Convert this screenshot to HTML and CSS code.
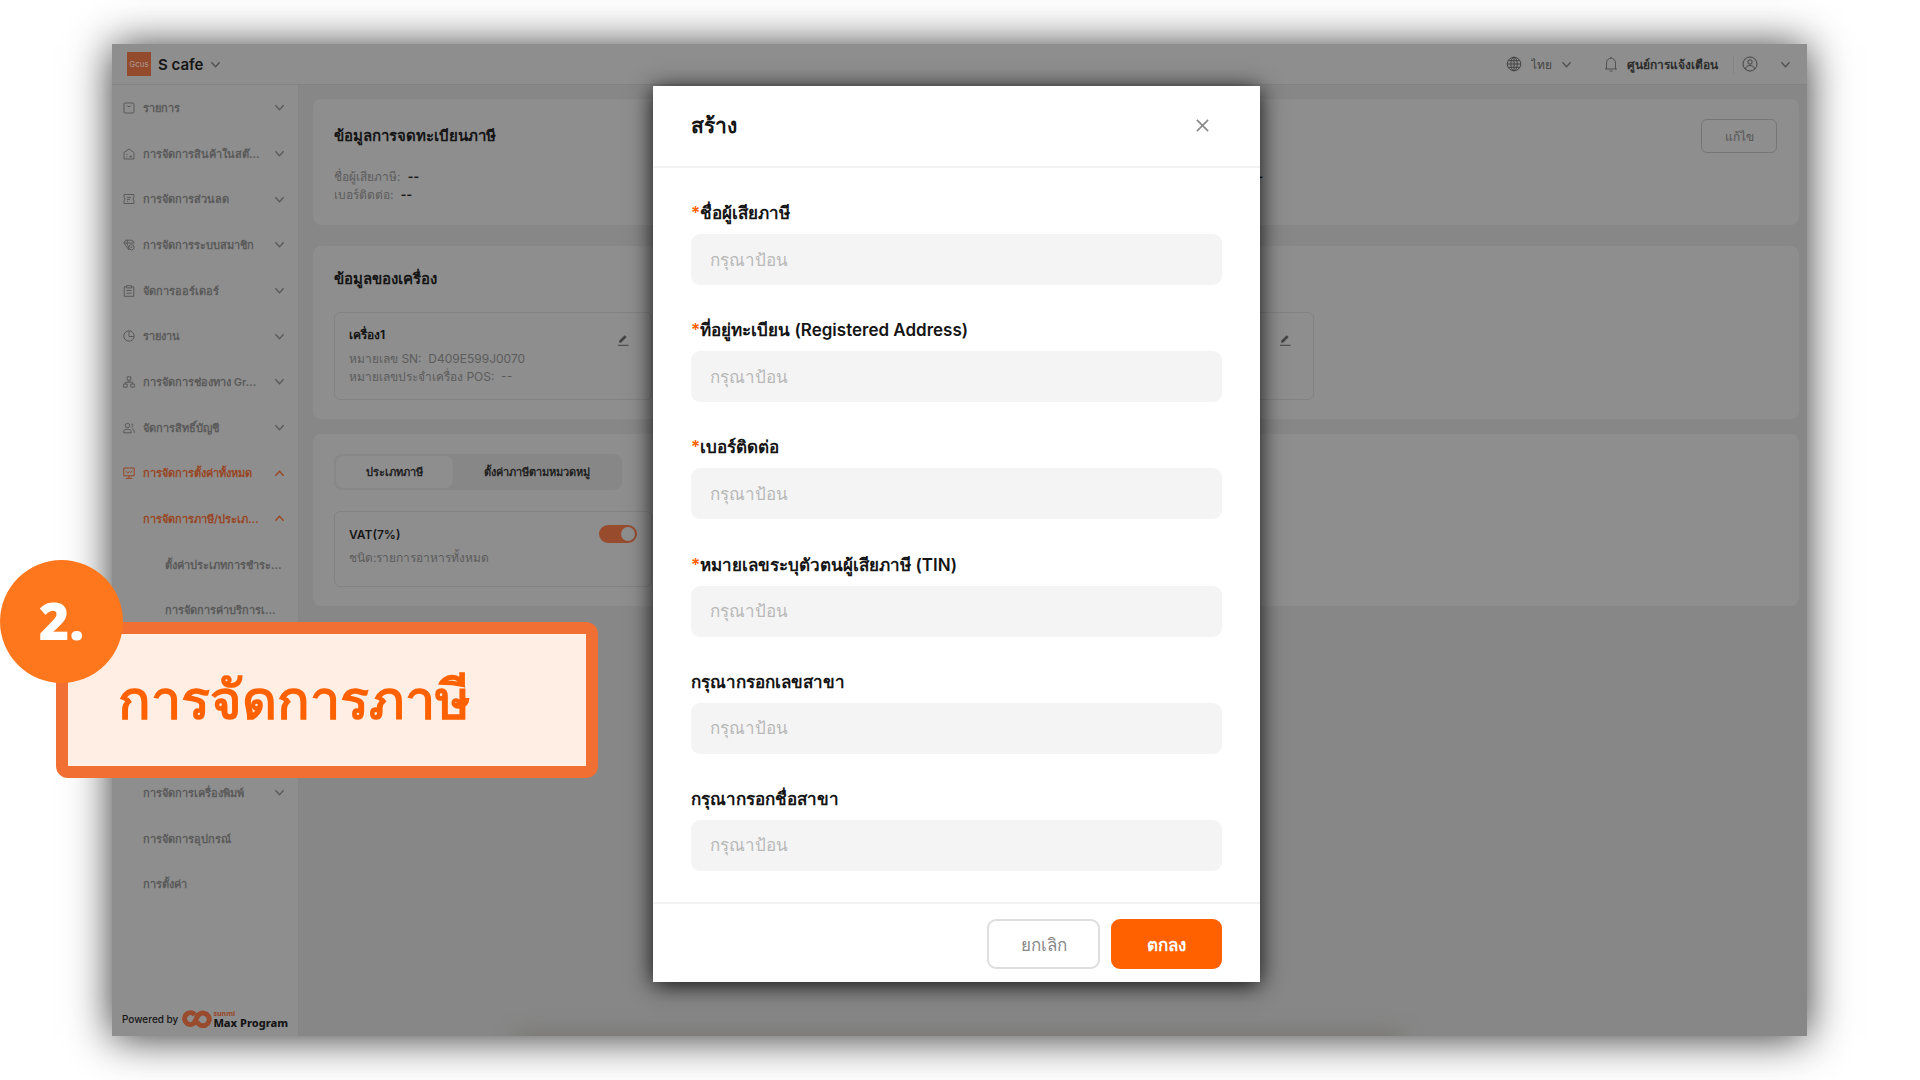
FILE: index.html
```html
<!DOCTYPE html>
<html lang="th"><head>
  <meta charset="utf-8">
  <meta name="viewport" content="width=device-width, initial-scale=1.0">
  <title>การจัดการภาษี</title>
  <link rel="stylesheet" href="styles.css">
</head>
<body>
  <!-- shared icons -->
  <svg class="sprite" aria-hidden="true">
    <symbol id="i-down" viewBox="0 0 12 12"><path d="M1.5 3.5 6 8.5l4.500-5"/></symbol>
    <symbol id="i-up" viewBox="0 0 12 12"><path d="M1.500 8.500 6 3.500l4.500 5"/></symbol>
    <symbol id="i-edit" viewBox="0 0 12 12"><path d="M1 11.300h10.500"/><path d="M2 8.800 2.400 6.600 7.700 1.200 9.700 3 4.300 8.400z" fill="currentColor" stroke="none"/></symbol>
  </svg>

  <div class="stage">
    <div class="window">
      <header class="topbar">
        <span class="brand-logo">Gcus</span>
        <button class="brand">S cafe <svg class="chev"><use href="#i-down"/></svg></button>
        <div class="topbar-right">
          <label class="lang">
            <svg class="icon-lg" viewBox="0 0 16 16"><circle cx="8" cy="8" r="6.800"/><ellipse cx="8" cy="8" rx="3.200" ry="6.800"/><path d="M8 1.200v13.600M1.200 8h13.600M2.200 4.700h11.600M2.200 11.300h11.600"/></svg>
            <select aria-label="ภาษา"><option>ไทย</option></select>
            <svg class="chev"><use href="#i-down"/></svg>
          </label>
          <button class="notice">
            <svg class="icon-lg" viewBox="0 0 16 16"><path d="M2 13h12M3.500 13V7a4.500 4.800 0 0 1 9 0v6M8 2.200V.8M6.500 15h3"/></svg>
            ศูนย์การแจ้งเตือน
          </button>
          <button class="account" aria-label="บัญชี">
            <svg class="icon-lg" viewBox="0 0 16 16"><circle cx="8" cy="8" r="7"/><circle cx="8" cy="6" r="2.200"/><path d="M3.500 13c.5-2.500 2.200-3.500 4.500-3.500s4 1 4.500 3.500"/></svg>
            <svg class="chev"><use href="#i-down"/></svg>
          </button>
        </div>
      </header>

      <div class="layout">
        <aside class="sidebar">
          <ul class="nav">
            <li><a href="#"><svg class="icon" viewBox="0 0 12 12"><rect x="1" y="1" width="10" height="10" rx="1"/><path d="M4 3.500c.6 1.500 3.400 1.500 4 0"/></svg><span>รายการ</span><svg class="chev"><use href="#i-down"/></svg></a></li>
            <li><a href="#"><svg class="icon" viewBox="0 0 12 12"><path d="M1 11V4.500L6 1l5 3.500V11z"/><path d="M3.500 6.500h1M3.500 8.800h1M6.500 8.800h2.500M7.700 7.500v2"/></svg><span>การจัดการสินค้าในสต๊...</span><svg class="chev"><use href="#i-down"/></svg></a></li>
            <li><a href="#"><svg class="icon" viewBox="0 0 12 12"><path d="M1 1.500h10v2.500l-1 2 1 2v2.500H1V8l1-2-1-2z"/><path d="M4 4.500h4M4 6.500h3M4 8.300h1"/></svg><span>การจัดการส่วนลด</span><svg class="chev"><use href="#i-down"/></svg></a></li>
            <li><a href="#"><svg class="icon" viewBox="0 0 12 12"><path d="M6 11 .8 4l2-2.800h6.400l2 2.800M.8 4h10.400M4 4l2 6M4.500 1.200 4 4"/><circle cx="8.500" cy="8.300" r="2.600"/><path d="M7.600 8.300h1.800"/></svg><span>การจัดการระบบสมาชิก</span><svg class="chev"><use href="#i-down"/></svg></a></li>
            <li><a href="#"><svg class="icon" viewBox="0 0 12 12"><path d="M3.500 1.800H1.200v9.500h9.600V1.800H8.500M3.500.7h5v2.200h-5zM3.500 5.500h5M3.500 8.200h5"/></svg><span>จัดการออร์เดอร์</span><svg class="chev"><use href="#i-down"/></svg></a></li>
            <li><a href="#"><svg class="icon" viewBox="0 0 12 12"><circle cx="6" cy="6" r="5.200"/><path d="M6 1v5.500h5"/></svg><span>รายงาน</span><svg class="chev"><use href="#i-down"/></svg></a></li>
            <li><a href="#"><svg class="icon" viewBox="0 0 12 12"><path d="M4.200.8h3.600v3.400H4.200zM.7 8h3.500v3.200H.7zM7.800 8h3.500v3.200H7.800zM6 4.200v2M2.400 8V6.200h7.200V8"/></svg><span>การจัดการช่องทาง Gr...</span><svg class="chev"><use href="#i-down"/></svg></a></li>
            <li><a href="#"><svg class="icon" viewBox="0 0 12 12"><circle cx="4.500" cy="3.500" r="2.200"/><path d="M.7 10.800V9.500c0-3 7.600-3 7.600 0v1.300zM8 2c2.500-.3 2.500 3 .5 3.200M9.300 6.800c1.500.4 2 1.500 2 4"/></svg><span>จัดการสิทธิ์บัญชี</span><svg class="chev"><use href="#i-down"/></svg></a></li>
            <li class="active"><a href="#"><svg class="icon" viewBox="0 0 12 12"><path d="M.8 1h10.400v7.800H.8zM6 8.800v2.400M2.800 11.300h6.400M2.800 4.200l2 1.800 1.700-1.500 1 1L9.300 4"/></svg><span>การจัดการตั้งค่าทั้งหมด</span><svg class="chev"><use href="#i-up"/></svg></a></li>
            <li class="active sub"><a href="#"><span>การจัดการภาษี/ประเภ...</span><svg class="chev"><use href="#i-up"/></svg></a></li>
            <li class="leaf"><a href="#"><span>ตั้งค่าประเภทการชำระ...</span></a></li>
            <li class="leaf"><a href="#"><span>การจัดการค่าบริการเ...</span></a></li>
            <li class="nav-gap"></li>
            <li class="sub"><a href="#"><span>การจัดการเครื่องพิมพ์</span><svg class="chev"><use href="#i-down"/></svg></a></li>
            <li class="sub"><a href="#"><span>การจัดการอุปกรณ์</span></a></li>
            <li class="sub"><a href="#"><span>การตั้งค่า</span></a></li>
          </ul>
          <div class="powered">
            Powered by
            <svg class="max-logo" viewBox="0 0 30 18"><path d="M13 5A5.800 5.800 0 1 0 11.500 13.500C14 11 14.500 6.500 17 4.500a6.300 6.300 0 1 1-2 7"/></svg>
            <span class="max-name"><small>sunmi</small>Max Program</span>
          </div>
        </aside>

        <main class="content">
          <section class="card card-tax">
            <div class="card-head">
              <h2>ข้อมูลการจดทะเบียนภาษี</h2>
              <button class="btn-edit">แก้ไข</button>
            </div>
            <div class="tax-info">
              <div>
                <p>ชื่อผู้เสียภาษี: <b>--</b></p>
                <p>เบอร์ติดต่อ: <b>--</b></p>
              </div>
              <div><p><b>--</b></p></div>
            </div>
          </section>

          <section class="card card-machine">
            <h2>ข้อมูลของเครื่อง</h2>
            <div class="boxes">
              <div class="box">
                <h3>เครื่อง1</h3>
                <p>หมายเลข SN:&nbsp; D409E599J0070</p>
                <p>หมายเลขประจำเครื่อง POS:&nbsp; --</p>
                <button class="pencil" aria-label="แก้ไข"><svg class="icon"><use href="#i-edit"/></svg></button>
              </div>
              <div class="box"></div>
              <div class="box">
                <button class="pencil" aria-label="แก้ไข"><svg class="icon"><use href="#i-edit"/></svg></button>
              </div>
            </div>
          </section>

          <section class="card card-type">
            <div class="tabs">
              <button class="tab on">ประเภทภาษี</button>
              <button class="tab">ตั้งค่าภาษีตามหมวดหมู่</button>
            </div>
            <div class="boxes">
              <div class="box vat">
                <div class="vat-head">
                  <label for="vat">VAT(7%)</label>
                  <input type="checkbox" id="vat" class="switch" checked>
                </div>
                <p>ชนิด:รายการอาหารทั้งหมด</p>
              </div>
            </div>
          </section>
        </main>
      </div>

      <!-- create dialog -->
      <div class="overlay">
        <form class="modal" role="dialog" aria-labelledby="modalTitle">
          <div class="modal-head">
            <h1 id="modalTitle">สร้าง</h1>
            <button type="button" class="close" aria-label="ปิด"><svg viewBox="0 0 12 12"><path d="M.8.8l10.400 10.400M11.200.8.8 11.200"/></svg></button>
          </div>
          <div class="modal-body">
            <div class="field">
              <label for="taxName"><i>*</i>ชื่อผู้เสียภาษี</label>
              <input type="text" id="taxName" placeholder="กรุณาป้อน">
            </div>
            <div class="field">
              <label for="taxAddress"><i>*</i>ที่อยู่ทะเบียน (Registered Address)</label>
              <input type="text" id="taxAddress" placeholder="กรุณาป้อน">
            </div>
            <div class="field">
              <label for="taxPhone"><i>*</i>เบอร์ติดต่อ</label>
              <input type="text" id="taxPhone" placeholder="กรุณาป้อน">
            </div>
            <div class="field">
              <label for="taxTin"><i>*</i>หมายเลขระบุตัวตนผู้เสียภาษี (TIN)</label>
              <input type="text" id="taxTin" placeholder="กรุณาป้อน">
            </div>
            <div class="field">
              <label for="branchNo">กรุณากรอกเลขสาขา</label>
              <input type="text" id="branchNo" placeholder="กรุณาป้อน">
            </div>
            <div class="field">
              <label for="branchName">กรุณากรอกชื่อสาขา</label>
              <input type="text" id="branchName" placeholder="กรุณาป้อน">
            </div>
          </div>
          <div class="modal-foot">
            <button type="button" class="btn-cancel">ยกเลิก</button>
            <button type="button" class="btn-ok">ตกลง</button>
          </div>
        </form>
      </div>
    </div>

    <!-- step label -->
    <div class="step">
      <span class="step-no">2.</span>
      <strong>การจัดการภาษี</strong>
    </div>
  </div>
</body>
</html>
```
FILE: styles.css
```css
* {
  box-sizing: border-box;
}
body {
  margin: 0;
  background: #fff;
  color: #151515;
  font-family: Inter, "Liberation Sans", sans-serif;
  font-size: 12px;
}
h1, h2, h3, p, ul {
  margin: 0;
  padding: 0;
}
button, select, input {
  font: inherit;
  color: inherit;
  background: none;
  border: none;
  margin: 0;
  padding: 0;
}
svg {
  fill: none;
  stroke: currentColor;
  flex: none;
}
.sprite {
  position: absolute;
  width: 0;
  height: 0;
}
.icon {
  width: 12px;
  height: 12px;
}
.icon-lg {
  width: 16px;
  height: 16px;
}
.chev {
  width: 11px;
  height: 11px;
  stroke-width: 1.5;
}

.stage {
  position: relative;
  display: flex;
  min-height: 100vh;
  padding: 44px 113px 44px 112px;
  overflow: hidden;
}
.window {
  position: relative;
  flex: 1;
  display: flex;
  flex-direction: column;
  background: #878787;
  box-shadow: 0 2px 40px rgba(0, 0, 0, 0.8);
}

/* top bar */
.topbar {
  display: flex;
  align-items: center;
  height: 41px;
  padding: 0 16px 0 15px;
  background: #8e8e8e;
  border-bottom: 1px solid #828282;
}
.brand-logo {
  width: 24px;
  height: 24px;
  background: #944b2d;
  color: #ab9a92;
  font-size: 8px;
  line-height: 24px;
  text-align: center;
}
.brand {
  display: flex;
  align-items: center;
  gap: 7px;
  margin-left: 7px;
  font-size: 15px;
  font-weight: 600;
}
.brand .chev, .topbar-right .chev {
  color: #505050;
}
.topbar-right {
  display: flex;
  align-items: center;
  margin-left: auto;
  color: #444;
}
.lang, .notice, .account {
  display: flex;
  align-items: center;
}
.lang {
  gap: 9px;
}
.lang select {
  appearance: none;
}
.notice {
  gap: 8px;
  margin-left: 31px;
  padding-right: 15px;
  border-right: 1px solid #858585;
  color: #2c2c2c;
  font-weight: 700;
}
.notice svg {
  color: #505050;
}
.account {
  gap: 22px;
  margin-left: 8px;
}

.layout {
  flex: 1;
  display: flex;
}

/* sidebar */
.sidebar {
  display: flex;
  flex-direction: column;
  width: 187px;
  background: #8e8e8e;
  border-right: 1px solid #858585;
  color: #5a5a5a;
}
.nav {
  flex: 1;
  display: flex;
  flex-direction: column;
  list-style: none;
  font-size: 11px;
  font-weight: 600;
}
.nav li {
  flex: 1;
  display: flex;
  align-items: center;
}
.nav .nav-gap {
  flex: 3;
}
.nav a {
  flex: 1;
  display: flex;
  align-items: center;
  padding: 0 13px 0 11px;
  color: inherit;
  text-decoration: none;
}
.nav span {
  line-height: 24px;
  white-space: nowrap;
}
.nav .icon + span {
  margin-left: 8px;
}
.nav .chev {
  margin-left: auto;
}
.nav .sub a {
  padding-left: 31px;
}
.nav .leaf a {
  padding-left: 53px;
}
.nav .active {
  color: #984624;
}
.powered {
  display: flex;
  align-items: flex-end;
  height: 129px;
  padding: 0 0 8px 10px;
  color: #151515;
  font-size: 10px;
  font-weight: 500;
  line-height: 18px;
}
.max-logo {
  width: 30px;
  height: 18px;
  margin: 0 1px 0 4px;
  color: #984b2d;
  stroke-width: 5;
}
.max-name {
  display: flex;
  flex-direction: column;
  font-family: "Noto Sans", sans-serif;
  font-size: 11px;
  font-weight: 800;
  line-height: 11px;
}
.max-name small {
  color: #984b2d;
  font-size: 7px;
  line-height: 6px;
}

/* content */
.content {
  flex: 1;
  min-width: 0;
  padding: 14px 8px 0 14px;
}
.card {
  padding: 20px 22px 20px 21px;
  background: #8e8e8e;
  border-radius: 8px;
}
.card h2 {
  font-size: 15px;
  font-weight: 700;
  line-height: 26px;
}
.card p {
  color: #5c5c5c;
  line-height: 18px;
}
.card-tax {
  height: 126px;
  margin-bottom: 21px;
}
.card-head {
  display: flex;
  align-items: center;
  justify-content: space-between;
  height: 34px;
}
.btn-edit {
  width: 76px;
  height: 34px;
  border: 1px solid #757575;
  border-radius: 6px;
  color: #555;
}
.tax-info {
  display: grid;
  grid-template-columns: 918px 1fr;
  margin-top: 15px;
}
.tax-info b {
  margin-left: 4px;
  color: #151515;
}
.tax-info div + div b {
  margin-left: 0;
}
.card-machine {
  height: 173px;
  margin-bottom: 15px;
}
.boxes {
  display: grid;
  grid-template-columns: repeat(auto-fill, 318px);
  gap: 13px;
}
.box {
  position: relative;
  padding: 11px 14px;
  border: 1px solid #828282;
  border-radius: 6px;
}
.card-machine .boxes {
  margin-top: 20px;
}
.card-machine .box {
  height: 88px;
}
.box h3 {
  font-size: 12px;
  font-weight: 700;
  line-height: 22px;
  margin-bottom: 4px;
}
.pencil {
  position: absolute;
  top: 21px;
  right: 22px;
  height: 12px;
  color: #444;
}
.card-type {
  height: 172px;
}
.tabs {
  display: flex;
  width: 288px;
  height: 36px;
  padding: 2px;
  background: #878787;
  border-radius: 8px;
}
.tab {
  flex: 1;
  border-radius: 8px;
  font-size: 11px;
  font-weight: 700;
  color: #222;
}
.tab.on {
  flex: 0 0 117px;
  background: #8e8e8e;
}
.card-type .boxes {
  margin-top: 21px;
}
.vat {
  height: 76px;
}
.vat-head {
  display: flex;
  align-items: center;
  justify-content: space-between;
  margin: 2px 0 6px;
}
.vat-head label {
  font-weight: 600;
}
.switch {
  appearance: none;
  display: flex;
  justify-content: flex-end;
  width: 38px;
  height: 18px;
  padding: 2px;
  border-radius: 9px;
  background: #984b2d;
}
.switch::before {
  content: "";
  width: 14px;
  height: 14px;
  border-radius: 50%;
  background: #8e8e8e;
}

/* modal */
.overlay {
  position: absolute;
  inset: 0;
  display: flex;
  justify-content: center;
  padding: 42px 6px 54px 0;
  overflow: hidden;
}
.overlay::after {
  content: "";
  position: absolute;
  left: 24%;
  right: 24%;
  bottom: -12px;
  height: 12px;
  border-radius: 6px;
  box-shadow: 0 0 20px 4px rgba(110, 108, 100, 0.6);
}
.modal {
  display: flex;
  flex-direction: column;
  width: 607px;
  background: #fff;
  box-shadow: 0 3px 22px rgba(0, 0, 0, 0.9);
}
.modal-head {
  display: flex;
  align-items: center;
  justify-content: space-between;
  height: 82px;
  padding: 0 51px 2px 38px;
  border-bottom: 2px solid #f2f2f2;
}
.modal-head h1 {
  font-size: 21px;
  font-weight: 700;
}
.close {
  width: 13px;
  height: 13px;
  color: #888;
}
.close svg {
  display: block;
  stroke-width: 1.5;
}
.modal-body {
  flex: 1;
  display: flex;
  flex-direction: column;
  justify-content: space-between;
  padding: 32px 38px 31px;
}
.field {
  display: flex;
  flex-direction: column;
  gap: 8px;
}
.field label {
  font-size: 17px;
  font-weight: 600;
  line-height: 26px;
}
.field i {
  color: #ff6100;
  font-style: normal;
}
.field input {
  height: 51px;
  padding: 0 19px;
  background: #f4f4f4;
  border-radius: 9px;
  font-size: 17px;
}
.field input::placeholder {
  color: #b8b8b8;
}
.modal-foot {
  display: flex;
  align-items: center;
  justify-content: flex-end;
  gap: 11px;
  height: 80px;
  padding: 2px 38px 0;
  border-top: 2px solid #f2f2f2;
}
.modal-foot button {
  height: 50px;
  border-radius: 9px;
  font-size: 17px;
}
.modal-foot .btn-cancel {
  width: 113px;
  border: 2px solid #dedede;
  color: #888;
}
.modal-foot .btn-ok {
  width: 111px;
  background: #ff6100;
  color: #fff;
  font-weight: 700;
}

/* step label */
.step {
  position: absolute;
  left: 56px;
  top: 622px;
  display: flex;
  align-items: center;
  width: 542px;
  height: 156px;
  padding-left: 50px;
  background: #ffeee4;
  border: 12px solid #f26f33;
  border-radius: 12px;
  color: #ff6100;
  font-size: 54px;
}
.step-no {
  position: absolute;
  left: -68px;
  top: -74px;
  width: 123px;
  height: 123px;
  border-radius: 50%;
  background: #ff771c;
  color: #fff;
  font-family: "Open Sans", sans-serif;
  font-size: 52px;
  font-weight: 800;
  line-height: 119px;
  text-align: center;
}
```
